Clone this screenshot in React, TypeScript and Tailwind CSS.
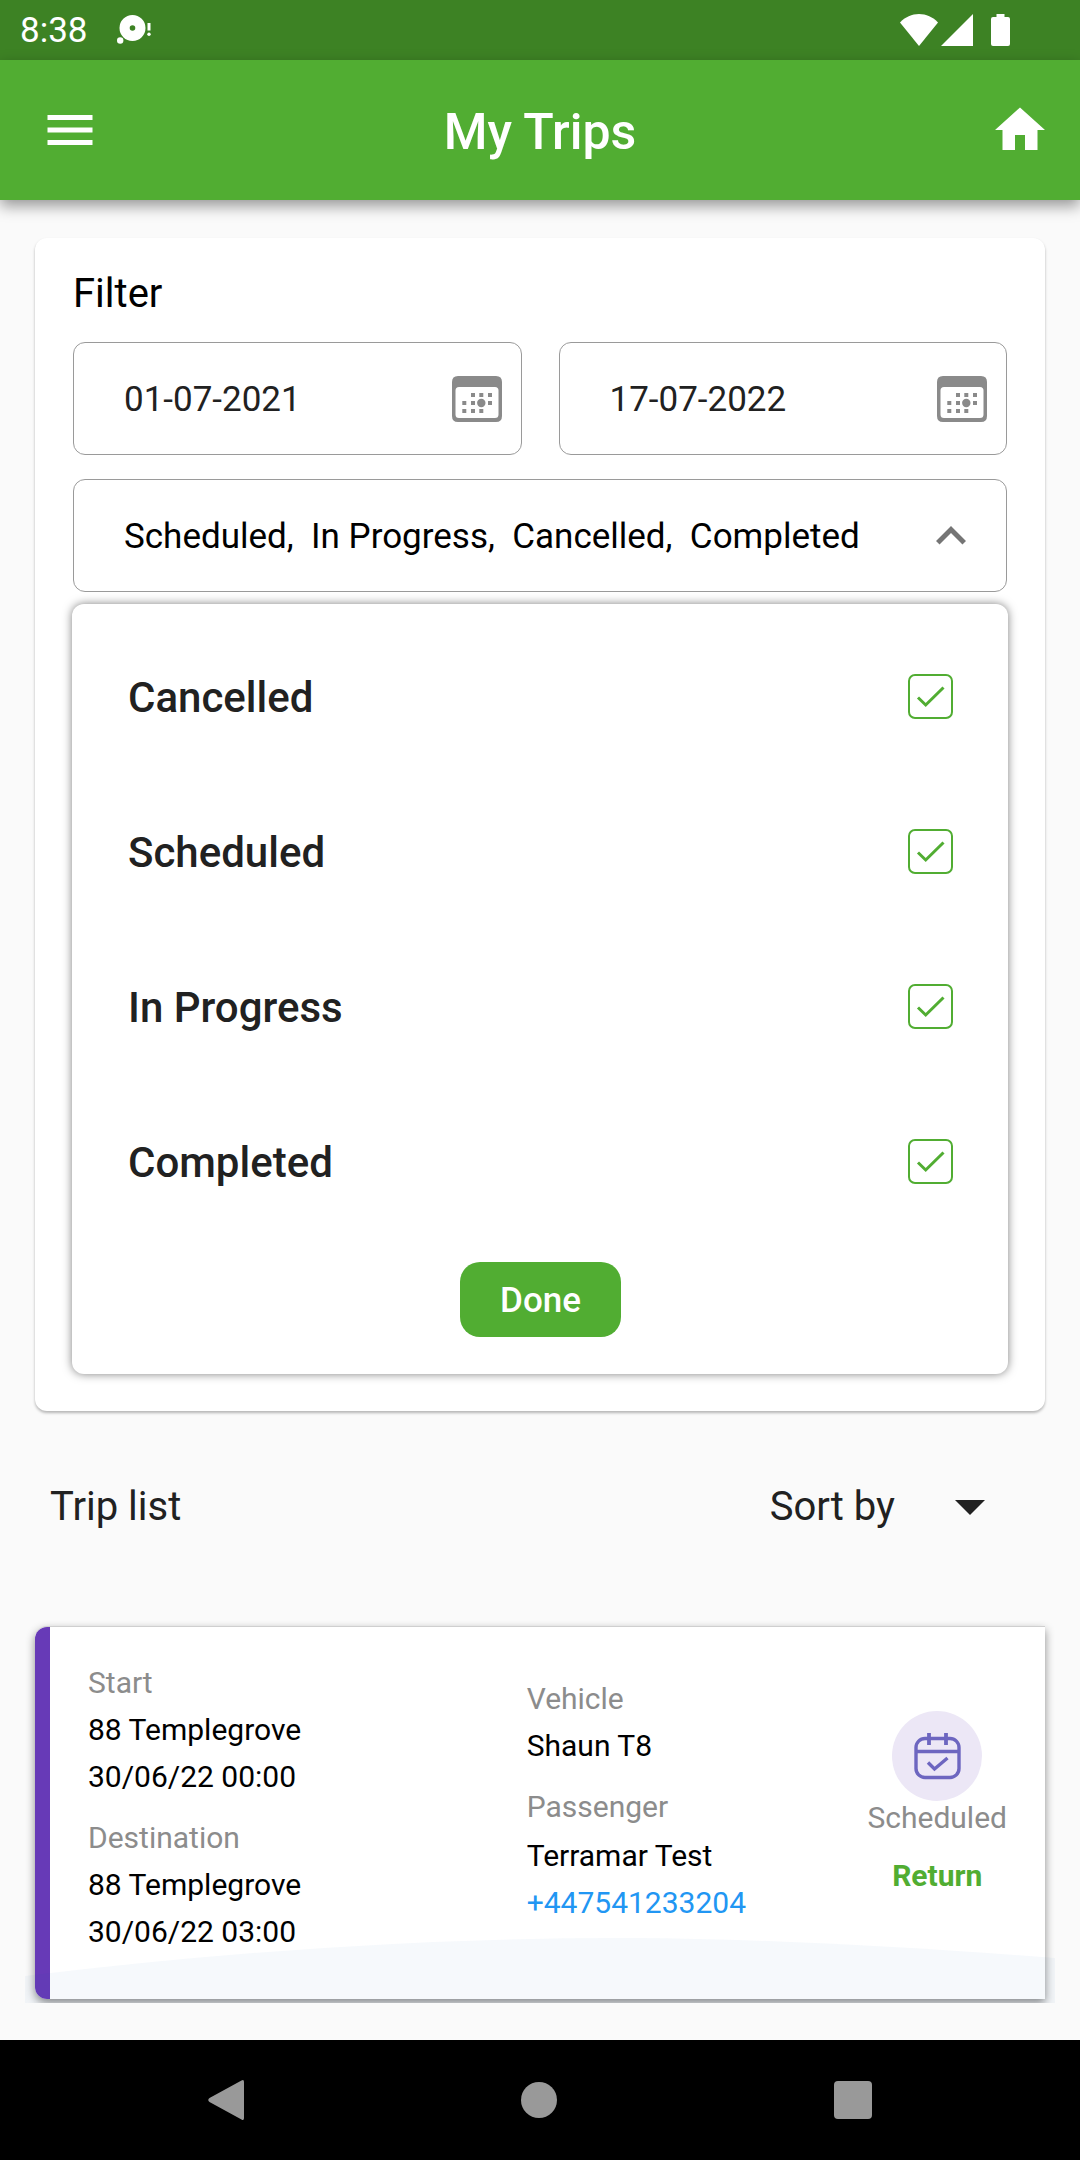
import { useState } from "react";
import { MdExpandLess, MdHome, MdMenu } from "react-icons/md";

const STATUSES = ["Cancelled", "Scheduled", "In Progress", "Completed"];
const SUMMARY_ORDER = ["Scheduled", "In Progress", "Cancelled", "Completed"];

function NotificationIcon() {
  return (
    <svg viewBox="0 0 34 30" className="h-[30px] w-[34px]" fill="currentColor" aria-hidden="true">
      <path
        fillRule="evenodd"
        d="M15.5 0a13 13 0 1 1 0 26a13 13 0 1 1 0-26Zm0 10.2a2.8 2.8 0 1 0 0 5.6a2.8 2.8 0 1 0 0-5.6Z"
      />
      <circle cx="3.2" cy="25.5" r="3.2" />
      <rect x="30.5" y="8" width="3" height="7.5" />
      <circle cx="32" cy="19.3" r="1.7" />
    </svg>
  );
}

function StatusBar() {
  return (
    <div className="flex h-[60px] items-center justify-between bg-[#3d8224] pr-[70px] pl-5 text-white">
      <div className="flex items-center gap-[29px]">
        <span className="pt-0.5 text-[35px] leading-[42px]">8:38</span>
        <NotificationIcon />
      </div>
      <div className="flex items-center" aria-hidden="true">
        <svg viewBox="0 0 38 32" className="mr-[3px] h-8 w-[38px]" fill="currentColor">
          <path d="M0 8.500C5 3 12 0 19 0s14 3 19 8.500L19 32Z" />
        </svg>
        <svg viewBox="0 0 32 32" className="mr-[18px] size-8" fill="currentColor">
          <path d="M32 0v32H0Z" />
        </svg>
        <svg viewBox="0 0 19 32" className="h-8 w-[19px]" fill="currentColor">
          <path d="M5.500 0h8v3H17q2 0 2 2v25q0 2-2 2H2q-2 0-2-2V5q0-2 2-2h3.500Z" />
        </svg>
      </div>
    </div>
  );
}

function AppBar() {
  return (
    <header className="relative flex h-[140px] items-center justify-between bg-[#51ad32] px-[30px] text-white shadow-[0_6px_14px_rgba(0,0,0,0.4)]">
      <button type="button" aria-label="Menu" className="pl-2.5">
        <MdMenu className="size-[60px]" />
      </button>
      <h1 className="pt-[3px] text-[50px] leading-[60px] font-medium">My Trips</h1>
      <button type="button" aria-label="Home" className="pl-2.5">
        <MdHome className="size-[60px]" />
      </button>
    </header>
  );
}

function CalendarIcon() {
  return (
    <svg viewBox="0 0 50 46" className="h-[46px] w-[50px]" fill="#8a8a8a" aria-hidden="true">
      <path
        fillRule="evenodd"
        d="M6 0h38q6 0 6 6v34q0 6-6 6H6q-6 0-6-6V6q0-6 6-6Zm1 11q-3.500 0-3.500 3.500v24Q3.500 42 7 42h36q3.500 0 3.500-3.500v-24Q46.500 11 43 11Z"
      />
      <path d="M19 17h4v4h-4ZM27.300 17h4v4h-4ZM36 17h4v4h-4ZM10.300 25h4v4h-4ZM19 25h4v4h-4ZM36 25h4v4h-4ZM10.300 33h4v4h-4ZM19 33h4v4h-4ZM27.300 33h4v4h-4Z" />
      <circle cx="29.300" cy="27" r="4.200" />
    </svg>
  );
}

function DateField({ label, value }: { label: string; value: string }) {
  return (
    <div className="flex h-[113px] min-w-0 flex-1 items-center rounded-xl border border-[#9a9a9a] pr-[19px] pl-[50px]">
      <input
        type="text"
        aria-label={label}
        defaultValue={value}
        className="min-w-0 flex-1 pt-0.5 text-[35px] leading-[42px] text-[#212121] outline-none"
      />
      <button type="button" aria-label={`Pick ${label.toLowerCase()}`}>
        <CalendarIcon />
      </button>
    </div>
  );
}

function StatusOption({
  label,
  checked,
  onToggle,
}: {
  label: string;
  checked: boolean;
  onToggle: () => void;
}) {
  return (
    <label className="flex h-[155px] items-center justify-between">
      <span className="pt-0.5 text-[42px] leading-[50px] font-medium text-[#212121]">{label}</span>
      <span className="grid size-[45px]">
        <input
          type="checkbox"
          checked={checked}
          onChange={onToggle}
          className="col-start-1 row-start-1 size-full appearance-none rounded-[7px] border-2 border-[#51ad32]"
        />
        {checked && (
          <svg
            viewBox="0 0 45 45"
            className="pointer-events-none col-start-1 row-start-1 size-full"
            fill="none"
            stroke="#51ad32"
            strokeWidth="3"
            aria-hidden="true"
          >
            <path d="m10 23.500 7.700 7.500L35.500 13.500" />
          </svg>
        )}
      </span>
    </label>
  );
}

function FilterCard() {
  const [selected, setSelected] = useState(STATUSES);
  const [open, setOpen] = useState(true);

  const toggle = (status: string) =>
    setSelected((prev) =>
      prev.includes(status) ? prev.filter((s) => s !== status) : [...prev, status],
    );

  return (
    <section className="rounded-xl bg-white px-[38px] pt-8 pb-[37px] shadow-[0_2px_3px_rgba(0,0,0,0.28)]">
      <h2 className="text-[40px] leading-[48px] text-black">Filter</h2>
      <div className="mt-6 flex gap-[37px]">
        <DateField label="From date" value="01-07-2021" />
        <DateField label="To date" value="17-07-2022" />
      </div>
      <button
        type="button"
        aria-expanded={open}
        onClick={() => setOpen(!open)}
        className="mt-6 flex h-[113px] w-full items-center justify-between rounded-xl border border-[#9a9a9a] pr-[25px] pl-[50px] text-[35px] leading-[42px] text-black"
      >
        <span className="pt-0.5 whitespace-pre">
          {SUMMARY_ORDER.filter((s) => selected.includes(s)).join(",  ")}
        </span>
        <MdExpandLess className={open ? "size-[60px] text-[#757575]" : "size-[60px] rotate-180 text-[#757575]"} />
      </button>
      {open && (
        <div className="-mx-px mt-3 rounded-xl bg-white pt-[15px] pr-[55px] pb-[37px] pl-14 shadow-[0_0_10px_rgba(0,0,0,0.5)]">
          {STATUSES.map((status) => (
            <StatusOption
              key={status}
              label={status}
              checked={selected.includes(status)}
              onToggle={() => toggle(status)}
            />
          ))}
          <div className="mt-[23px] flex justify-center">
            <button
              type="button"
              onClick={() => setOpen(false)}
              className="h-[75px] rounded-[20px] bg-[#51ad32] px-10 pt-0.5 text-[35px] leading-[42px] font-medium text-white"
            >
              Done
            </button>
          </div>
        </div>
      )}
    </section>
  );
}

function TripListHeader() {
  return (
    <div className="mt-[72px] flex items-center justify-between pr-[60px] pl-[15px] text-[40px] leading-[48px] text-[#212121]">
      <h2>Trip list</h2>
      <div className="relative flex items-center">
        <select
          aria-label="Sort by"
          className="appearance-none bg-transparent pr-[90px] outline-none [field-sizing:content]"
        >
          <option>Sort by</option>
        </select>
        <svg
          viewBox="0 0 30 15"
          className="pointer-events-none absolute right-0 h-[15px] w-[30px]"
          fill="currentColor"
          aria-hidden="true"
        >
          <path d="M0 0h30L15 15Z" />
        </svg>
      </div>
    </div>
  );
}

function ScheduledIcon() {
  return (
    <svg viewBox="0 0 90 90" className="size-[90px]" fill="none" aria-hidden="true">
      <circle cx="45" cy="45" r="45" fill="#ece7f6" />
      <g stroke="#6d66c0" strokeWidth="3.400">
        <rect x="24" y="27.500" width="43" height="39" rx="9" />
        <path d="M24 40.500h43" />
        <path d="M37 22v12M54 22v12" strokeWidth="3.800" />
        <path d="m36 51.500 6.500 6.500L55.500 47" />
      </g>
    </svg>
  );
}

function TripCard() {
  return (
    <div className="relative mt-[85px] overflow-hidden px-2.5 pt-2.5 pb-1">
      <article className="flex rounded-l-xl border-t border-[#cfcfcf] bg-white shadow-[0_4px_10px_rgba(0,0,0,0.45)]">
        <div className="w-[15px] rounded-l-xl bg-[#673ab7]" />
        <div className="grid flex-1 grid-cols-[439fr_341fr_auto] px-[38px] pt-8 pb-11 text-[30px] leading-[47px] text-black">
          <div>
            <p className="text-[#8c8c8c]">Start</p>
            <p>88 Templegrove</p>
            <p>30/06/22 00:00</p>
            <p className="mt-3.5 text-[#8c8c8c]">Destination</p>
            <p>88 Templegrove</p>
            <p>30/06/22 03:00</p>
          </div>
          <div className="mt-4">
            <p className="text-[#8c8c8c]">Vehicle</p>
            <p>Shaun T8</p>
            <p className="mt-3.5 text-[#8c8c8c]">Passenger</p>
            <p className="mt-0.5">Terramar Test</p>
            <a href="tel:+447541233204" className="text-[#2196f3]">
              +447541233204
            </a>
          </div>
          <div className="mt-[52px] flex flex-col items-center leading-[34px]">
            <ScheduledIcon />
            <p className="text-[#8c8c8c]">Scheduled</p>
            <p className="mt-6 font-bold text-[#51ad32]">Return</p>
          </div>
        </div>
      </article>
      <svg
        viewBox="0 0 1030 66"
        preserveAspectRatio="none"
        className="pointer-events-none absolute inset-x-0 bottom-0 h-[66px] w-full"
        aria-hidden="true"
      >
        <path d="M0 39Q320 0 610 1Q780 2 1030 21V66H0Z" fill="#0d6eaa" fillOpacity="0.04" />
      </svg>
    </div>
  );
}

function NavigationBar() {
  return (
    <nav className="flex h-[120px] items-center justify-between bg-black px-[208px] text-[#999]">
      <button type="button" aria-label="Back">
        <svg viewBox="0 0 36 40" className="h-10 w-9" fill="currentColor" aria-hidden="true">
          <path d="M33.500.5Q36-1 36 2v36q0 3-2.500 1.500L1.500 22q-2.500-2 0-4Z" />
        </svg>
      </button>
      <button type="button" aria-label="Home screen">
        <span className="block size-9 rounded-full bg-current" />
      </button>
      <button type="button" aria-label="Recent apps">
        <span className="block size-[38px] rounded bg-current" />
      </button>
    </nav>
  );
}

export default function App() {
  return (
    <div className="flex min-h-screen flex-col bg-[#fafafa] font-[Roboto,sans-serif]">
      <StatusBar />
      <AppBar />
      <main className="flex-1 pt-[38px] pb-9">
        <div className="px-[35px]">
          <FilterCard />
          <TripListHeader />
        </div>
        <div className="px-[25px]">
          <TripCard />
        </div>
      </main>
      <NavigationBar />
    </div>
  );
}
